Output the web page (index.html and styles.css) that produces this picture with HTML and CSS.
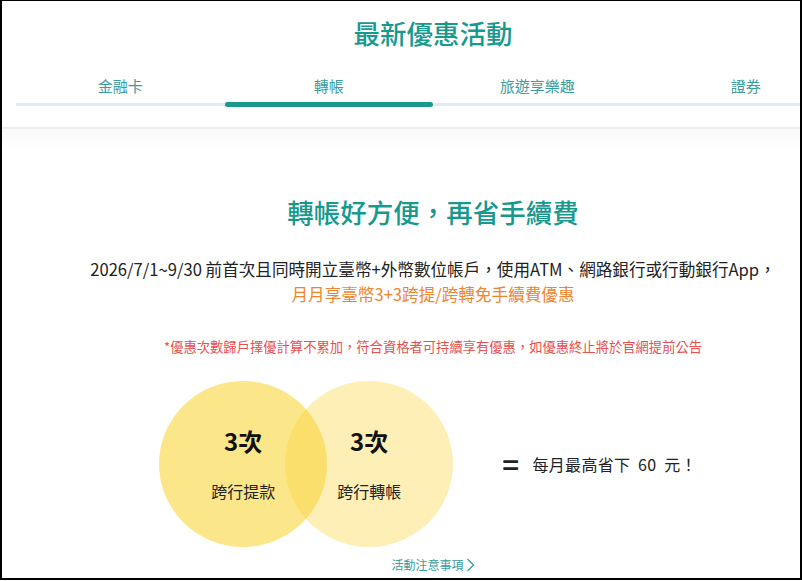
FILE: index.html
```html
<!DOCTYPE html>
<html lang="zh-Hant">
<head>
    <meta charset="UTF-8">
    <title>最新優惠活動</title>
    <link rel="stylesheet" href="styles.css">
</head>
<body>
    <div id="frame">
        <div id="header">
            <div class="wrap">
                <h1 class="title">最新優惠活動</h1>
                <ul id="tab">
                    <li><span>金融卡</span><i></i></li>
                    <li class="selected"><span>轉帳</span><i></i></li>
                    <li><span>旅遊享樂趣</span><i></i></li>
                    <li><span>證券</span><i></i></li>
                </ul>
            </div>
        </div>
        <div id="content">
            <div class="wrap">
                <h2 class="sub-title">轉帳好方便，再省手續費</h2>
                <p class="desc">2026/7/1~9/30 前首次且同時開立臺幣+外幣數位帳戶，使用ATM、網路銀行或行動銀行App，</p>
                <p class="desc orange">月月享臺幣3+3跨提/跨轉免手續費優惠</p>
                <p class="note">*優惠次數歸戶擇優計算不累加，符合資格者可持續享有優惠，如優惠終止將於官網提前公告</p>
                <div class="venn">
                    <div class="circle c1">
                        <b>3次</b>
                        <span>跨行提款</span>
                    </div>
                    <div class="circle c2">
                        <b>3次</b>
                        <span>跨行轉帳</span>
                    </div>
                    <div class="equal">=</div>
                    <div class="save">每月最高省下&nbsp; 60 &nbsp;元！</div>
                </div>
                <a class="more" href="#">活動注意事項<svg width="9" height="14" viewBox="0 0 9 14"><path d="M1.5 1 L7.5 7 L1.5 13" fill="none" stroke="#3a9c9c" stroke-width="1.3"/></svg></a>
            </div>
        </div>
    </div>
</body>
</html>
```

FILE: styles.css
```css
*{
    margin: 0;
    padding: 0;
}
html,body{
    background: #fff;
}
body{
    font-family: "Noto Sans CJK TC", "Noto Sans", sans-serif;
    color: #222;
}
ul{
    list-style: none;
}
#frame{
    width: 802px;
    height: 580px;
    box-sizing: border-box;
    border: 2px solid #000;
    border-top-width: 1px;
    overflow: hidden;
    background: #fff;
}
.wrap{
    width: 834px;
    margin-left: 14px;
    text-align: center;
}
#header{
    padding-top: 12px;
    padding-bottom: 21px;
    border-bottom: 2px solid #ededed;
}
.title{
    font-size: 26.5px;
    line-height: 40px;
    font-weight: 500;
    color: #17998e;
}
#tab{
    display: flex;
    margin-top: 20px;
}
#tab li{
    flex: 1;
    display: flex;
    flex-direction: column;
    font-size: 15px;
    line-height: 26px;
    color: #3a9c9c;
}
#tab li span{
    height: 30px;
}
#tab li i{
    display: block;
    height: 3px;
    background: #deeef0;
}
#tab .selected i{
    height: 5px;
    margin-top: -1px;
    margin-bottom: -1px;
    border-radius: 3px;
    background: #17998e;
}
#content{
    height: 460px;
    background: linear-gradient(#f9f9f9, #fff 22px);
}
.sub-title{
    padding-top: 63px;
    font-size: 26.5px;
    line-height: 40px;
    font-weight: 500;
    color: #17998e;
}
.desc{
    font-size: 16.6px;
    line-height: 25px;
}
.sub-title + .desc{
    margin-top: 25px;
}
.orange{
    color: #f0852d;
}
.note{
    margin-top: 30px;
    font-size: 13.3px;
    line-height: 20px;
    color: #e8504f;
}
.venn{
    display: flex;
    align-items: center;
    justify-content: center;
    margin-top: 24px;
    padding-right: 10px;
}
.circle{
    width: 168px;
    height: 166px;
    border-radius: 50%;
    display: flex;
    flex-direction: column;
    align-items: center;
    justify-content: center;
    gap: 22px;
}
.circle b{
    font-size: 24px;
    line-height: 32px;
    font-weight: 700;
    color: #111;
}
.circle span{
    font-size: 16px;
    line-height: 24px;
    color: #222;
}
.c1{
    background: rgba(250, 214, 60, 0.6);
}
.c2{
    margin-left: -42px;
    background: rgba(250, 214, 60, 0.38);
}
.equal{
    margin-left: 50px;
    font-size: 26px;
    font-weight: 700;
    line-height: 30px;
    transform: scaleX(1.1);
}
.save{
    margin-left: 14px;
    font-size: 16px;
    letter-spacing: 0.3px;
}
.more{
    display: inline-flex;
    align-items: center;
    gap: 2px;
    margin-top: 9px;
    font-size: 12px;
    line-height: 18px;
    color: #3a9c9c;
    text-decoration: none;
}
```
